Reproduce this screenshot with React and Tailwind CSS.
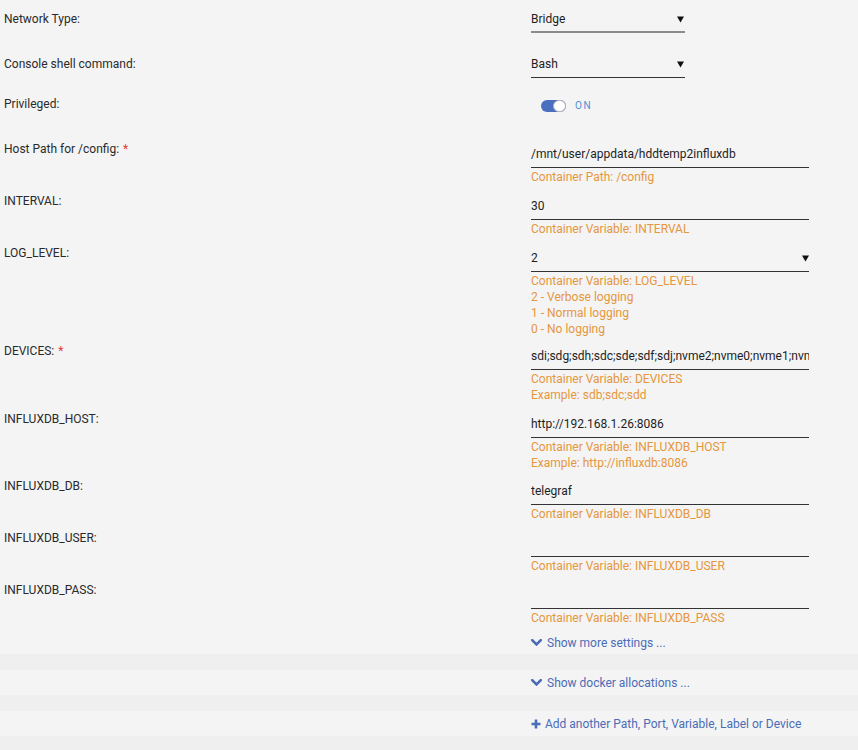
import React from 'react';

const font = "font-['Roboto','Liberation_Sans',sans-serif]";

function Arrow() {
  return (
    <svg width="7" height="7" viewBox="0 0 7 7" className="shrink-0">
      <path d="M0 0.5 H7 L3.5 6.5 Z" fill="#111" />
    </svg>
  );
}

function Chevron() {
  return (
    <svg width="11" height="8" viewBox="0 0 11 8" className="shrink-0">
      <path d="M1.2 1.2 L5.5 5.5 L9.8 1.2" fill="none" stroke="#4b6cb7" strokeWidth="2.6" strokeLinecap="square" />
    </svg>
  );
}

function Plus() {
  return (
    <svg width="10" height="10" viewBox="0 0 10 10" className="shrink-0">
      <path d="M5 0.5 V9.5 M0.5 5 H9.5" stroke="#4b6cb7" strokeWidth="2.6" />
    </svg>
  );
}

function Label({ text, required }) {
  return (
    <div className="w-[527px] shrink-0 leading-[20px] text-[#2a2a2a]">
      {text}
      {required && <span className="ml-1 text-[#e23a3a]">*</span>}
    </div>
  );
}

function Help({ lines }) {
  return (
    <div className="mt-px text-[12px] leading-[16px] text-[#e6963c]">
      {lines.map((l) => (
        <div key={l}>{l}</div>
      ))}
    </div>
  );
}

function Field({ label, required, value, help, select, top }) {
  return (
    <div className={`flex ${top}`}>
      <Label text={label} required={required} />
      <div className="w-[278px] pt-[5px]">
        <div className="flex h-[24px] items-start justify-between overflow-hidden whitespace-nowrap border-b border-[#333] leading-[20px] text-[#1e1e1e]">
          <span className="overflow-hidden">{value}</span>
          {select && (
            <span className="pt-[7px]">
              <Arrow />
            </span>
          )}
        </div>
        <Help lines={help} />
      </div>
    </div>
  );
}

function TopSelect({ label, value, top, line }) {
  return (
    <div className={`flex ${top}`}>
      <Label text={label} />
      <div className={`flex h-[24px] w-[154px] items-start justify-between leading-[20px] text-[#1e1e1e] ${line}`}>
        <span>{value}</span>
        <span className="pt-[7px] pr-px">
          <Arrow />
        </span>
      </div>
    </div>
  );
}

export default function App() {
  const fields = [
    { label: 'Host Path for /config:', required: true, value: '/mnt/user/appdata/hddtemp2influxdb', help: ['Container Path: /config'], top: 'mt-[25px]' },
    { label: 'INTERVAL:', value: '30', help: ['Container Variable: INTERVAL'], top: 'mt-[6px]' },
    { label: 'LOG_LEVEL:', value: '2', select: true, help: ['Container Variable: LOG_LEVEL', '2 - Verbose logging', '1 - Normal logging', '0 - No logging'], top: 'mt-[6px]' },
    { label: 'DEVICES:', required: true, value: 'sdi;sdg;sdh;sdc;sde;sdf;sdj;nvme2;nvme0;nvme1;nvme3', help: ['Container Variable: DEVICES', 'Example: sdb;sdc;sdd'], top: 'mt-[4px]' },
    { label: 'INFLUXDB_HOST:', value: 'http://192.168.1.26:8086', help: ['Container Variable: INFLUXDB_HOST', 'Example: http://influxdb:8086'], top: 'mt-[6px]' },
    { label: 'INFLUXDB_DB:', value: 'telegraf', help: ['Container Variable: INFLUXDB_DB'], top: 'mt-[5px]' },
    { label: 'INFLUXDB_USER:', value: '', help: ['Container Variable: INFLUXDB_USER'], top: 'mt-[6px]' },
    { label: 'INFLUXDB_PASS:', value: '', help: ['Container Variable: INFLUXDB_PASS'], top: 'mt-[6px]' },
  ];

  return (
    <div className={`min-h-[750px] bg-[#f4f4f4] text-[12px] ${font}`}>
      <div className="pl-[4px] pt-[9px]">
        <TopSelect label="Network Type:" value="Bridge" top="" line="border-b-2 border-[#8a8a8a]" />
        <TopSelect label="Console shell command:" value="Bash" top="mt-[21px]" line="border-b border-[#333] h-[23px]" />

        {/* Privileged toggle */}
        <div className="mt-[16px] flex">
          <Label text="Privileged:" />
          <div className="flex h-[20px] items-center gap-[9px] pl-[10px] pt-[3px]">
            <div className="relative h-[12px] w-[25px] rounded-full bg-[#4a6fbf]">
              <div className="absolute right-0 top-0 h-[12px] w-[13px] rounded-full border border-[#b5b5b5] bg-white" />
            </div>
            <span className="text-[10px] tracking-[1.5px] text-[#4a8fd6]">ON</span>
          </div>
        </div>

        {fields.map((f) => (
          <Field key={f.label} {...f} />
        ))}

        <div className="flex pt-[9px] pb-[3px]">
          <div className="w-[527px] shrink-0" />
          <div className="flex items-center gap-[5px] leading-[16px] text-[#4b6cb7]">
            <Chevron />
            <span>Show more settings ...</span>
          </div>
        </div>
      </div>

      <div className="h-[16px] bg-[#efefef]" />
      <div className="flex h-[25px] items-center pl-[4px]">
        <div className="w-[527px] shrink-0" />
        <div className="flex items-center gap-[5px] text-[#4b6cb7]">
          <Chevron />
          <span>Show docker allocations ...</span>
        </div>
      </div>
      <div className="h-[16px] bg-[#efefef]" />
      <div className="flex h-[25px] items-center pl-[4px]">
        <div className="w-[527px] shrink-0" />
        <div className="flex items-center gap-[4px] text-[#4b6cb7]">
          <Plus />
          <span>Add another Path, Port, Variable, Label or Device</span>
        </div>
      </div>
      <div className="h-[14px] bg-[#efefef]" />
    </div>
  );
}
